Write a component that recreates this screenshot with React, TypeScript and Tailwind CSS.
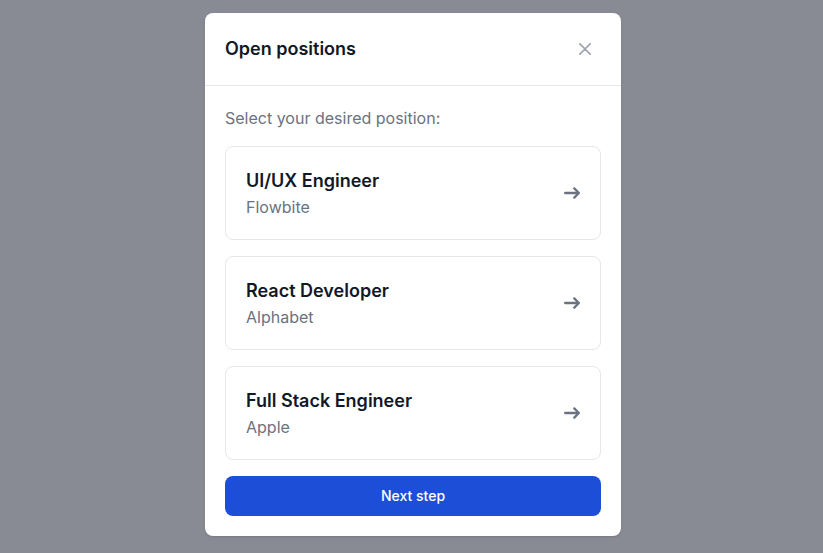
const jobs = [
  { title: "UI/UX Engineer", company: "Flowbite" },
  { title: "React Developer", company: "Alphabet" },
  { title: "Full Stack Engineer", company: "Apple" },
];

const App = () => {
  return (
    <div
      className="min-h-screen bg-[#888b93] flex justify-center items-start pt-[13px] pl-[3px]"
      style={{ fontFamily: "Inter, 'Noto Sans', sans-serif" }}
    >
      <div className="w-[416px] bg-white rounded-lg shadow-sm">
        <div className="flex items-center justify-between p-5 border-b border-[#e5e7eb]">
          <h3 className="text-lg font-semibold text-[#111827]">Open positions</h3>
          <button className="w-8 h-8 flex items-center justify-center rounded-lg text-[#9ca3af]">
            <svg className="w-3 h-3" viewBox="0 0 14 14" fill="none">
              <path
                stroke="currentColor"
                strokeLinecap="round"
                strokeLinejoin="round"
                strokeWidth="2"
                d="m1 1 6 6m0 0 6 6M7 7l6-6M7 7l-6 6"
              />
            </svg>
          </button>
        </div>

        <div className="p-5">
          <p className="text-[#6b7280] mb-4">Select your desired position:</p>
          <ul className="flex flex-col gap-4 mb-4">
            {jobs.map((job) => (
              <li key={job.title}>
                <div className="flex items-center justify-between p-5 border border-[#e5e7eb] rounded-lg bg-white cursor-pointer">
                  <div>
                    <div className="text-lg font-semibold text-[#111827]">{job.title}</div>
                    <div className="text-[#6b7280]">{job.company}</div>
                  </div>
                  <svg className="w-4 h-4 text-[#6b7280]" viewBox="0 0 14 10" fill="none">
                    <path
                      stroke="currentColor"
                      strokeLinecap="round"
                      strokeLinejoin="round"
                      strokeWidth="2"
                      d="M1 5h12m0 0L9 1m4 4L9 9"
                    />
                  </svg>
                </div>
              </li>
            ))}
          </ul>
          <button className="w-full bg-[#1d4ed8] text-white text-sm font-medium rounded-lg py-2.5 px-5">
            Next step
          </button>
        </div>
      </div>
    </div>
  );
};

export default App;
